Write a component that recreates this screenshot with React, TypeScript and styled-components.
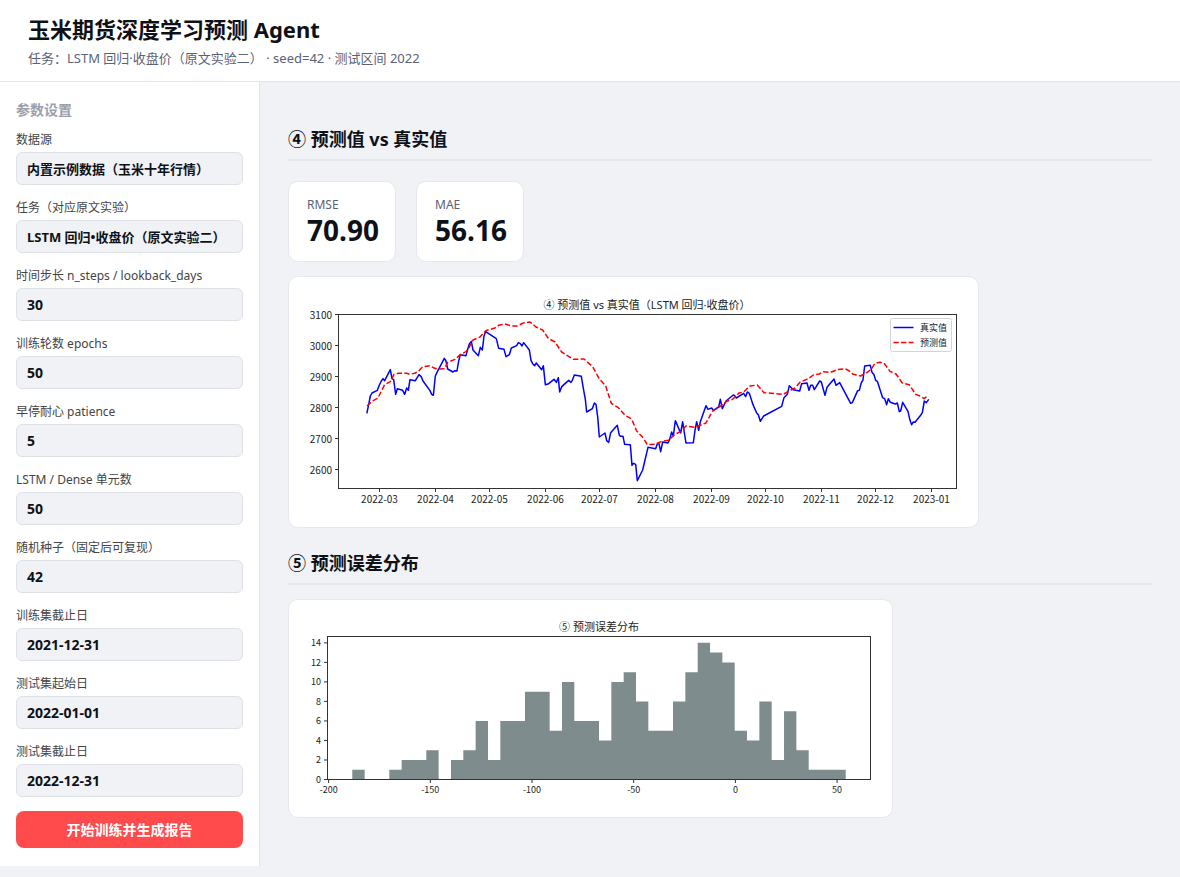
import React from "react";
import styled, { createGlobalStyle } from "styled-components";

const GlobalStyle = createGlobalStyle`
  *, *::before, *::after { box-sizing: border-box; }
  body {
    margin: 0;
    background: #f0f2f6;
    color: #0e1117;
    font-family: "Noto Sans", "Noto Sans CJK SC", sans-serif;
  }
  input, button { font-family: inherit; }
`;

const Header = styled.header`
  padding: 15px 28px 13px;
  background: #ffffff;
  border-bottom: 1px solid #e3e5eb;
`;

const Title = styled.h1`
  margin: 0;
  font-size: 22px;
  line-height: 28px;
  font-weight: 700;
`;

const Subtitle = styled.p`
  margin: 5px 0 0;
  font-size: 13px;
  line-height: 20px;
  color: #5a6275;
`;

const Layout = styled.div`
  display: flex;
  align-items: stretch;
`;

const Sidebar = styled.form`
  flex: 0 0 260px;
  padding: 18px 16px;
  background: #ffffff;
  border-right: 1px solid #e3e5eb;
`;

const SidebarTitle = styled.h2`
  margin: 0 0 11px;
  font-size: 14px;
  line-height: 20px;
  font-weight: 600;
  color: #9a9fac;
`;

const Field = styled.div`
  display: flex;
  flex-direction: column;
  gap: 4px;
  margin-bottom: 14px;
`;

const FieldLabel = styled.label`
  font-size: 12px;
  line-height: 17px;
  color: #444444;
`;

const FieldInput = styled.input<{ $numeric: boolean }>`
  width: 100%;
  height: 33px;
  padding: 0 10px;
  border: 1px solid #dfe1e8;
  border-radius: 6px;
  background: #f0f2f6;
  color: #0e1117;
  font-size: ${(p) => (p.$numeric ? "14px" : "13px")};
  font-weight: 700;
`;

const SubmitButton = styled.button`
  display: block;
  width: 100%;
  height: 37px;
  padding: 0 0 2px;
  border: 0;
  border-radius: 8px;
  background: #ff4b4b;
  color: #ffffff;
  font-size: 14px;
  font-weight: 700;
  cursor: pointer;
`;

const Main = styled.main`
  flex: 1;
  min-width: 0;
  padding: 44px 28px 28px;
`;

const Section = styled.section`
  & + & {
    margin-top: 22px;
  }
`;

const SectionTitle = styled.h2`
  margin: 0 0 14px;
  padding-bottom: 7px;
  border-bottom: 2px solid #e5e7ed;
  font-size: 18px;
  line-height: 26px;
  font-weight: 700;
`;

const Metrics = styled.div`
  display: flex;
  gap: 20px;
  margin: 20px 0 14px;
`;

const Card = styled.div`
  border: 1px solid #e5e8f0;
  border-radius: 10px;
  background: #ffffff;
`;

const MetricCard = styled(Card)`
  flex: 0 0 108px;
  padding: 13px 16px 15px 18px;
`;

const MetricLabel = styled.div`
  font-size: 12px;
  line-height: 19px;
  color: #5a6275;
`;

const MetricValue = styled.div`
  font-size: 28px;
  line-height: 32px;
  font-weight: 700;
`;

const ChartCard = styled(Card)<{ $maxWidth: number }>`
  max-width: ${(p) => p.$maxWidth}px;
`;

const Chart = styled.svg<{ $fontSize: number }>`
  display: block;
  width: 100%;
  height: auto;
  font-family: "Noto Sans CJK SC", sans-serif;
  font-size: ${(p) => p.$fontSize}px;
  fill: #222222;
`;

const ChartTitle = styled.text`
  font-family: "Noto Sans", "Noto Sans CJK SC", sans-serif;
  font-size: 11px;
  text-anchor: middle;
`;

const LegendText = styled.text`
  font-size: 9px;
`;

const Axis = styled.g`
  fill: none;
  stroke: #333333;
  stroke-width: 1;
`;

const fields = [
  { id: "source", label: "数据源", value: "内置示例数据（玉米十年行情）", numeric: false },
  { id: "task", label: "任务（对应原文实验）", value: "LSTM 回归•收盘价（原文实验二）", numeric: false },
  { id: "steps", label: "时间步长 n_steps / lookback_days", value: "30", numeric: true },
  { id: "epochs", label: "训练轮数 epochs", value: "50", numeric: true },
  { id: "patience", label: "早停耐心 patience", value: "5", numeric: true },
  { id: "units", label: "LSTM / Dense 单元数", value: "50", numeric: true },
  { id: "seed", label: "随机种子（固定后可复现）", value: "42", numeric: true },
  { id: "train-end", label: "训练集截止日", value: "2021-12-31", numeric: true },
  { id: "test-start", label: "测试集起始日", value: "2022-01-01", numeric: true },
  { id: "test-end", label: "测试集截止日", value: "2022-12-31", numeric: true },
];

const metrics = [
  { name: "RMSE", value: "70.90" },
  { name: "MAE", value: "56.16" },
];

/* Each series is split by period; the period offset is added to every x. */
type Part = { offset: number; points: string };

const actual: Part[] = [
  {
    offset: 0,
    points:
      "261,428 266,404 271,378 276,369 292,361 298,345 304,333 309,326 314,332 331,299 336,326 341,329 347,373 352,356 368,361 374,373 380,354 385,361 390,329 406,332 417,314 423,319 429,333 450,362 455,373 460,376 466,318 471,307 482,286 493,265 498,273 503,297 519,306 525,302 531,303 536,273 541,254 558,257 563,238 568,222 574,214 579,240 595,257 601,232 607,240 612,198 617,185",
  },
  {
    offset: 600,
    points:
      "49,206 56,235 72,238 78,260 88,254 94,234 110,227 115,218 121,221 126,228 131,218 148,240 153,271 158,281 164,287 169,279 185,299 190,287 196,344 206,341 222,328 229,337 235,323 239,366 245,350 266,331 273,337 277,331 283,315 304,319 310,355 316,388 320,426 337,416 343,399 348,403 353,440 358,501 375,489 380,512 386,517 392,488 412,466 418,496 423,499 429,499 434,523 451,524 456,586 461,580 467,583 472,632 488,600 504,532 527,536 532,521 537,521 542,545 548,516 564,519 569,508 575,486 580,498 586,452 602,489 608,455 613,488 618,519 640,518 645,481 650,455 656,481 661,455",
  },
  {
    offset: 1260,
    points:
      "18,407 24,418 35,414 40,421 56,411 61,388 67,416 78,393 100,375 104,377 109,384 131,370 137,380 142,366 148,370 159,404 170,429 175,434 181,454 191,438 245,409 252,383 262,373 268,347 280,359 299,363 305,341 321,339 327,361 332,346 338,346 343,359 359,333 364,336 375,376 381,352 402,327 408,346 419,338 452,400 457,398 473,362 478,361 484,338 489,330 494,288 511,286 516,307 522,314 527,331 532,334 548,383 554,386 560,404 565,386 571,397 586,402 592,399 598,425 602,423 608,397 624,424 630,451 635,464 640,456 645,457 662,436 667,428 673,393 679,398 685,390",
  },
];

const predicted: Part[] = [
  {
    offset: 0,
    points:
      "261,408 276,394 293,385 303,366 314,344 331,335 342,313 355,310 380,310 390,313 406,309 416,303 428,290 450,287 460,293 472,297 493,296 503,277 525,268 541,254 558,245 566,235 579,210 600,201",
  },
  {
    offset: 600,
    points:
      "17,182 45,174 56,166 75,162 95,168 112,168 130,159 150,156 168,171 188,180 205,205 225,216 245,246 280,268 312,267 338,290 357,325 377,348 394,400 415,413 435,436 455,447 470,483 490,504 502,524 525,523 545,514 566,511 583,494 603,484 618,468 645,472 678,459",
  },
  {
    offset: 1260,
    points:
      "37,424 60,409 80,394 98,388 117,369 131,366 150,348 172,345 192,368 250,373 262,366 285,354 300,337 325,326 340,315 358,312 370,305 392,307 412,299 435,296 448,303 460,313 482,318 500,308 512,300 525,280 540,277 552,279 570,304 588,312 607,339 628,344 647,373 663,379 672,386 685,377",
  },
];

const joinParts = (parts: Part[]) =>
  parts
    .flatMap((part) =>
      part.points.split(" ").map((pair) => {
        const [x, y] = pair.split(",").map(Number);
        return `${x + part.offset},${y}`;
      })
    )
    .join(" ");

const priceTicks = [3100, 3000, 2900, 2800, 2700, 2600];

const monthTicks = [
  { x: 90.5, text: "2022-03" },
  { x: 146.5, text: "2022-04" },
  { x: 200.5, text: "2022-05" },
  { x: 256.5, text: "2022-06" },
  { x: 310.5, text: "2022-07" },
  { x: 366.5, text: "2022-08" },
  { x: 422.5, text: "2022-09" },
  { x: 476.5, text: "2022-10" },
  { x: 532.5, text: "2022-11" },
  { x: 586.5, text: "2022-12" },
  { x: 642.5, text: "2023-01" },
];

function PriceChart() {
  return (
    <Chart $fontSize={10} viewBox="0 0 689 250" role="img" aria-label="预测值 vs 真实值">
      <ChartTitle x="358" y="32">④ 预测值 vs 真实值（LSTM 回归·收盘价）</ChartTitle>
      <g transform="translate(-9 -7) scale(0.33333)" fill="none" strokeWidth="4.5" strokeLinejoin="round">
        <polyline points={joinParts(actual)} stroke="#0000ff" strokeLinecap="square" />
        <polyline points={joinParts(predicted)} stroke="#ff0000" strokeDasharray="16 7" />
      </g>
      <Axis>
        <rect x="49.5" y="37.5" width="618" height="174" />
        {priceTicks.map((v, i) => (
          <path key={v} d={`M46 ${37.5 + i * 31}h3.5`} />
        ))}
        {monthTicks.map((t) => (
          <path key={t.text} d={`M${t.x} 211.5v3.5`} />
        ))}
      </Axis>
      <g textAnchor="end">
        {priceTicks.map((v, i) => (
          <text key={v} x="43" y={41.5 + i * 31}>{v}</text>
        ))}
      </g>
      <g textAnchor="middle">
        {monthTicks.map((t) => (
          <text key={t.text} x={t.x} y="226">{t.text}</text>
        ))}
      </g>
      <rect x="601.5" y="41.5" width="61" height="33" rx="2" fill="#ffffff" stroke="#d4d4d4" />
      <path d="M604.5 50.5h20" stroke="#0000ff" strokeWidth="1.5" />
      <path d="M604.5 65.5h20" stroke="#ff0000" strokeWidth="1.5" strokeDasharray="5.3 2.3" />
      <LegendText x="631" y="54">真实值</LegendText>
      <LegendText x="631" y="69">预测值</LegendText>
    </Chart>
  );
}

const bins = [
  1, 0, 0, 1, 2, 2, 3, 0, 2, 3, 6, 2, 6, 6, 9, 9, 5, 10, 6, 6,
  4, 10, 11, 8, 5, 5, 8, 11, 14, 13, 12, 5, 4, 8, 2, 7, 3, 1, 1, 1,
];
const errorTicks = [-200, -150, -100, -50, 0, 50];
const countTicks = [0, 2, 4, 6, 8, 10, 12, 14];

const countY = (n: number) => 179.5 - n * 9.76;
const errorX = (v: number) => 446.4 + v * 2.034;
const binX = (i: number) => 63.3 + i * 12.335;

const histogramPath =
  `M${binX(0)} ${countY(0)}` +
  bins.map((n, i) => `V${countY(n)}H${binX(i + 1)}`).join("") +
  `V${countY(0)}Z`;

function ErrorChart() {
  return (
    <Chart $fontSize={9} viewBox="0 0 603 217" role="img" aria-label="预测误差分布">
      <ChartTitle x="310" y="31">⑤ 预测误差分布</ChartTitle>
      <path d={histogramPath} fill="#7f8c8d" />
      <Axis>
        <rect x="38.5" y="36.5" width="543" height="143" />
        {countTicks.map((n) => (
          <path key={n} d={`M35 ${countY(n)}h3.5`} />
        ))}
        {errorTicks.map((v) => (
          <path key={v} d={`M${errorX(v)} 179.5v3.5`} />
        ))}
      </Axis>
      <g textAnchor="end">
        {countTicks.map((n) => (
          <text key={n} x="32" y={countY(n) + 3.5}>{n}</text>
        ))}
      </g>
      <g textAnchor="middle">
        {errorTicks.map((v) => (
          <text key={v} x={errorX(v)} y="193">{v}</text>
        ))}
      </g>
    </Chart>
  );
}

export default function App() {
  return (
    <>
      <GlobalStyle />
      <Header>
        <Title>玉米期货深度学习预测 Agent</Title>
        <Subtitle>任务：LSTM 回归·收盘价（原文实验二） · seed=42 · 测试区间 2022</Subtitle>
      </Header>
      <Layout>
        <Sidebar onSubmit={(e) => e.preventDefault()}>
          <SidebarTitle>参数设置</SidebarTitle>
          {fields.map((f) => (
            <Field key={f.id}>
              <FieldLabel htmlFor={f.id}>{f.label}</FieldLabel>
              <FieldInput id={f.id} type="text" defaultValue={f.value} $numeric={f.numeric} />
            </Field>
          ))}
          <SubmitButton type="submit">开始训练并生成报告</SubmitButton>
        </Sidebar>
        <Main>
          <Section>
            <SectionTitle>④ 预测值 vs 真实值</SectionTitle>
            <Metrics>
              {metrics.map((m) => (
                <MetricCard key={m.name}>
                  <MetricLabel>{m.name}</MetricLabel>
                  <MetricValue>{m.value}</MetricValue>
                </MetricCard>
              ))}
            </Metrics>
            <ChartCard $maxWidth={691}>
              <PriceChart />
            </ChartCard>
          </Section>
          <Section>
            <SectionTitle>⑤ 预测误差分布</SectionTitle>
            <ChartCard $maxWidth={605}>
              <ErrorChart />
            </ChartCard>
          </Section>
        </Main>
      </Layout>
    </>
  );
}
